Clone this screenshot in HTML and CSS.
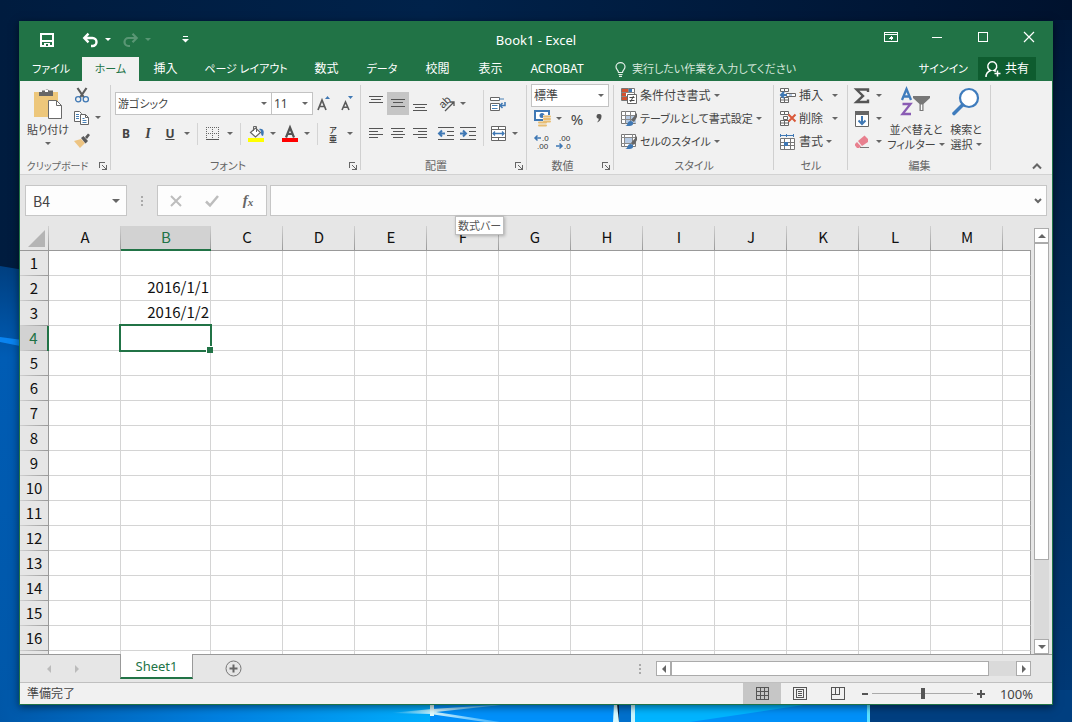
FILE: index.html
```html
<!DOCTYPE html>
<html lang="ja">
<head>
<meta charset="utf-8">
<title>Book1 - Excel</title>
<link rel="stylesheet" href="styles.css">
</head>
<body>
<svg class="wallpaper" viewBox="0 0 1072 722" preserveAspectRatio="none" aria-hidden="true">
  <defs>
    <linearGradient id="sky" x1="0" y1="0" x2="1" y2="0"><stop offset="0" stop-color="#001c3f"/><stop offset=".4" stop-color="#00224a"/><stop offset="1" stop-color="#00122e"/></linearGradient>
    <linearGradient id="leftGlow" x1="0" y1="0" x2="0" y2="1"><stop offset="0" stop-color="#003f80"/><stop offset=".2" stop-color="#005cb4"/><stop offset="1" stop-color="#0057a8"/></linearGradient>
    <linearGradient id="rightGlow" x1="0" y1="0" x2="0" y2="1"><stop offset="0" stop-color="#001737"/><stop offset=".5" stop-color="#002a59"/><stop offset="1" stop-color="#003a78"/></linearGradient>
    <linearGradient id="floor" x1="0" y1="0" x2="1" y2="0"><stop offset="0" stop-color="#0057a8"/><stop offset=".5" stop-color="#0080e0"/><stop offset="1" stop-color="#00b0ff"/></linearGradient>
    <linearGradient id="ray" x1="0" y1="0" x2="1" y2="0"><stop offset="0" stop-color="#9fe8ff" stop-opacity="0"/><stop offset="1" stop-color="#c8f4ff"/></linearGradient>
    <linearGradient id="rayOut" x1="0" y1="0" x2="1" y2="0"><stop offset="0" stop-color="#e0faff"/><stop offset="1" stop-color="#6fd0ff" stop-opacity=".4"/></linearGradient>
  </defs>
  <rect width="1072" height="722" fill="url(#sky)"/>
  <rect x="1040" y="20" width="32" height="702" fill="url(#rightGlow)"/>
  <path d="M0 266 L30 271 V722 H0Z" fill="url(#leftGlow)"/>
  <path d="M0 337 L30 341 V348 L0 342Z" fill="#0a84f0"/>
  <rect y="690" width="440" height="32" fill="url(#floor)"/>
  <rect x="430" y="690" width="184" height="32" fill="#0090fa"/>
  <path d="M390 713 L432 709 V714Z" fill="url(#ray)"/>
  <path d="M432 709 L510 704 L436 712 L500 722 H485 L430 714Z" fill="url(#rayOut)"/>
  <rect x="430" y="704" width="4" height="12" fill="#e0fbff"/>
  <rect x="619" y="690" width="13" height="32" fill="#0070cc"/>
  <path d="M614 704h3l2 18h-6z" fill="#d8f9ff"/>
  <rect x="631" y="690" width="4" height="32" fill="#c8f6ff"/>
  <rect x="635" y="690" width="232" height="32" fill="#00b4ff"/>
  <path d="M690 722 L810 704 H867 V722Z" fill="#0090f8"/>
  <rect x="867" y="690" width="3" height="32" fill="#5ce0ff"/>
  <rect x="870" y="690" width="202" height="32" fill="#003f80"/>
</svg>

<main class="window">
  <header class="titlebar">
    <div class="quick">
      <button class="qbtn" aria-label="上書き保存"><svg width="14" height="14" viewBox="0 0 14 14"><path d="M1 1h12v12H1z" fill="none" stroke="#fff" stroke-width="2"/><path d="M1 8h12" stroke="#fff" stroke-width="2"/><path d="M4 10h6v4H4z" fill="#fff"/><path d="M6 11h2v2H6z" fill="#217346"/></svg></button>
      <button class="qbtn undo" aria-label="元に戻す"><svg width="15" height="14" viewBox="0 0 15 14"><path d="M1 5h8.500a4 4 0 0 1 0 8H8M5.500 .7L1.300 5l4.200 4.300" fill="none" stroke="#fff" stroke-width="2.400"/></svg></button>
      <button class="drop light" aria-label="元に戻す一覧"><i class="caret"></i></button>
      <button class="qbtn dim" aria-label="やり直し"><svg width="15" height="14" viewBox="0 0 15 14"><path d="M14 5H5.500a4 4 0 0 0 0 8H7M9.500 .7L13.700 5 9.500 9.300" fill="none" stroke="#fff" stroke-width="2.200"/></svg></button>
      <button class="drop light dim" aria-label="やり直し一覧"><i class="caret"></i></button>
      <button class="qbtn custom" aria-label="カスタマイズ"><svg width="7" height="7" viewBox="0 0 7 7"><path d="M1 .5h5" stroke="#fff"/><path d="M0 3h7L3.500 6.500z" fill="#fff"/></svg></button>
    </div>
    <h1>Book1 - Excel</h1>
    <div class="winbtns">
      <button aria-label="リボンの表示オプション"><svg class="crisp" width="14" height="12" viewBox="0 0 14 12"><path d="M.5 1.500h13v9H.5zM.5 3.500h13M7 5v4M5 7h1v-1h2v1h1" fill="none" stroke="#fff"/></svg></button>
      <button aria-label="最小化"><svg class="crisp" width="10" height="10" viewBox="0 0 10 10"><path d="M0 5.500h10" stroke="#fff"/></svg></button>
      <button aria-label="最大化"><svg class="crisp" width="10" height="10" viewBox="0 0 10 10"><path d="M.5 .5h9v9h-9z" fill="none" stroke="#fff"/></svg></button>
      <button aria-label="閉じる"><svg width="10" height="10" viewBox="0 0 10 10"><path d="M0 0l10 10M10 0L0 10" stroke="#fff" stroke-width="1.200"/></svg></button>
    </div>
  </header>

  <nav class="tabs">
    <button class="t-file kana">ファイル</button>
    <button class="t-home kana current">ホーム</button>
    <button class="t-two">挿入</button>
    <button class="t-page kana">ページ レイアウト</button>
    <button class="t-two">数式</button>
    <button class="t-data kana">データ</button>
    <button class="t-two">校閲</button>
    <button class="t-two">表示</button>
    <button class="t-acro">ACROBAT</button>
    <button class="tell kana"><svg width="11" height="15" viewBox="0 0 11 15"><path d="M3.500 10.500C3.500 8 1 7.500 1 4.800a4.500 4.200 0 0 1 9 0c0 2.700-2.500 3.200-2.500 5.700zM3.500 12.500h4M4 14.300h3" fill="none" stroke="#e4efe8" stroke-width="1.200"/></svg>実行したい作業を入力してください</button>
    <span class="spacer"></span>
    <button class="signin kana">サインイン</button>
    <button class="share"><svg width="16" height="16" viewBox="0 0 16 16"><path d="M1 16c0-4 2-5.500 4.500-6.500a4.500 4.500 0 1 1 3.500 0c.8.300 1.300.6 1.800 1M12.500 9.500v6M9.500 12.500h6" fill="none" stroke="#fff" stroke-width="1.500"/></svg>共有</button>
  </nav>

  <section class="ribbon">
    <div class="group clipboard">
      <div class="body">
        <button class="big kana"><svg width="30" height="32" viewBox="0 0 30 32"><path d="M1 4h24v25H1z" fill="#edc77b"/><path d="M6 4h3V2.500h3a2.500 2.500 0 0 1 4 0h4V4h0v4H6z" fill="#666"/><path d="M12 2h3v2h-3z" fill="#fff"/><path d="M15.500 12.500h8l5 5v13h-13z" fill="#fff" stroke="#6a6a6a"/><path d="M23.500 12.500v5h5" fill="none" stroke="#6a6a6a"/></svg><span>貼り付け</span><i class="caret"></i></button>
        <div class="stack">
          <button aria-label="切り取り"><svg width="16" height="16" viewBox="0 0 16 16"><path d="M3.500 1l6.500 9.500M12.500 1L6 10.500" stroke="#5c5c5c" stroke-width="2.200"/><circle cx="4.200" cy="12.300" r="2.600" fill="none" stroke="#3f78b4" stroke-width="1.300"/><circle cx="11.800" cy="12.300" r="2.600" fill="none" stroke="#3f78b4" stroke-width="1.300"/></svg></button>
          <button aria-label="コピー"><svg width="16" height="16" viewBox="0 0 16 16"><path d="M.5 1.500h5l2 2v8h-7z" fill="#fff" stroke="#666"/><path d="M6.500 4.500h5l3 3v7h-8z" fill="#fff" stroke="#666"/><path d="M11.500 4.500v3h3" fill="none" stroke="#666"/><path d="M2 4.500h3M2 6.500h3M2 8.500h3M8.500 8.500h2M8.500 10.500h4M8.500 12.500h4" fill="none" stroke="#4880b5"/></svg><i class="caret"></i></button>
          <button aria-label="書式のコピー"><svg width="16" height="16" viewBox="0 0 16 16"><path d="M0 8l7-2 4 4-5 5z" fill="#edc482"/><path d="M7 5l2.500-2 4.500 5-2.500 2.500zM11 4l3-3.500 2 1.500-3 4z" fill="#5a5a5a"/></svg></button>
        </div>
      </div>
      <div class="label"><span>クリップボード</span><button class="launch" aria-label="クリップボードの詳細"><svg class="crisp" width="8" height="8" viewBox="0 0 8 8"><path d="M.5 6V.5H6M3 3l4 4M7.500 3v4.500H3" fill="none" stroke="#666"/></svg></button></div>
    </div>

    <div class="group font">
      <div class="body rows">
        <div class="row">
          <label class="combo name kana"><select aria-label="フォント"><option>游ゴシック</option></select></label><label class="combo size"><select aria-label="フォント サイズ"><option>11</option></select></label>
          <button class="ic" aria-label="拡大"><svg width="14" height="15" viewBox="0 0 14 15"><path d="M1 14L5 4l4 10M2.500 10.500h5" fill="none" stroke="#5a5a5a" stroke-width="1.700"/><path d="M8 3l2.500-3L13 3z" fill="#3f78b4"/></svg></button>
          <button class="ic" aria-label="縮小"><svg width="14" height="15" viewBox="0 0 14 15"><path d="M3 14l3.500-8L10 14M4.300 11.300h4.400" fill="none" stroke="#5a5a5a" stroke-width="1.600"/><path d="M9 0h5l-2.500 3z" fill="#3f78b4"/></svg></button>
        </div>
        <div class="row">
          <button class="ic bold">B</button><button class="ic ital">I</button><button class="ic under">U</button><button class="drop" aria-label="下線"><i class="caret"></i></button>
          <span class="sep"></span>
          <button class="ic" aria-label="罫線"><svg class="crisp" width="14" height="14" viewBox="0 0 14 14"><path d="M0 .5h13M0 6.500h13M.5 0v13M6.500 0v13M12.500 0v13" stroke="#666" stroke-dasharray="1 1"/><path d="M0 12.500h13" stroke="#555"/></svg></button><button class="drop" aria-label="罫線一覧"><i class="caret"></i></button>
          <span class="sep"></span>
          <button class="ic" aria-label="塗りつぶし"><svg width="16" height="17" viewBox="0 0 16 17"><path d="M2.500 7.500l5-4.500 5 4.500-5 4.500z" fill="#fff" stroke="#666" stroke-width="1.200"/><path d="M5.500 6V1.500h3V7" fill="none" stroke="#666"/><path d="M11 4c4-1 6 2 4 7-2 0-2-3-2-5z" fill="#3f78b4"/><path d="M0 13h16v4H0z" fill="#ff0"/></svg></button><button class="drop" aria-label="塗りつぶし一覧"><i class="caret"></i></button>
          <button class="ic" aria-label="文字の色"><svg width="16" height="17" viewBox="0 0 16 17"><path d="M4 12.500L8 2.500l4 10M5.500 9h5" fill="none" stroke="#555" stroke-width="2.200"/><path d="M0 13h16v4H0z" fill="#f00"/></svg></button><button class="drop" aria-label="文字の色一覧"><i class="caret"></i></button>
          <span class="sep"></span>
          <button class="ic" aria-label="ふりがな"><svg width="12" height="18" viewBox="0 0 12 18"><text x="2" y="8" class="rubytext">ア</text><text x="2" y="17" class="rubytext">亜</text></svg></button><button class="drop" aria-label="ふりがな一覧"><i class="caret"></i></button>
        </div>
      </div>
      <div class="label"><span>フォント</span><button class="launch" aria-label="フォントの詳細"><svg class="crisp" width="8" height="8" viewBox="0 0 8 8"><path d="M.5 6V.5H6M3 3l4 4M7.500 3v4.500H3" fill="none" stroke="#666"/></svg></button></div>
    </div>

    <div class="group align">
      <div class="body">
        <div class="rows">
          <div class="row">
            <button class="ic" aria-label="上揃え"><svg class="crisp" width="14" height="16" viewBox="0 0 14 16"><path d="M0 .5h14M2 3.500h10M0 6.500h14" stroke="#555"/></svg></button><button class="ic on" aria-label="上下中央揃え"><svg class="crisp" width="14" height="16" viewBox="0 0 14 16"><path d="M0 3.500h14M2 6.500h10M0 10.500h14" stroke="#555"/></svg></button><button class="ic" aria-label="下揃え"><svg class="crisp" width="14" height="16" viewBox="0 0 14 16"><path d="M0 8.500h14M2 11.500h10M0 14.500h14" stroke="#555"/></svg></button>
            <button class="ic gap" aria-label="方向"><svg width="17" height="16" viewBox="0 0 17 16"><text transform="translate(5 13) rotate(-45)" class="abtext">ab</text><path d="M7 15L15.500 6.500M12 6h4v4" fill="none" stroke="#555" stroke-width="1.300"/></svg></button><button class="drop" aria-label="方向一覧"><i class="caret"></i></button>
          </div>
          <div class="row">
            <button class="ic" aria-label="左揃え"><svg class="crisp" width="14" height="13" viewBox="0 0 14 13"><path d="M0 1.500h14M0 4.500h9M0 7.500h14M0 10.500h9" stroke="#555"/></svg></button><button class="ic" aria-label="中央揃え"><svg class="crisp" width="14" height="13" viewBox="0 0 14 13"><path d="M0 1.500h14M2 4.500h10M0 7.500h14M2 10.500h10" stroke="#555"/></svg></button><button class="ic" aria-label="右揃え"><svg class="crisp" width="14" height="13" viewBox="0 0 14 13"><path d="M0 1.500h14M5 4.500h9M0 7.500h14M5 10.500h9" stroke="#555"/></svg></button>
            <button class="ic gap" aria-label="インデントを減らす"><svg width="16" height="13" viewBox="0 0 16 13"><path class="crisp" d="M0 .5h16M9 4.500h7M9 8.500h7M0 12.500h16" stroke="#555"/><path d="M1 6.500h6M4 3.500l-3 3 3 3" fill="none" stroke="#3f78b4" stroke-width="2"/></svg></button><button class="ic" aria-label="インデントを増やす"><svg width="16" height="13" viewBox="0 0 16 13"><path class="crisp" d="M0 .5h16M9 4.500h7M9 8.500h7M0 12.500h16" stroke="#555"/><path d="M0 6.500h6M3 3.500l3 3-3 3" fill="none" stroke="#3f78b4" stroke-width="2"/></svg></button>
          </div>
        </div>
        <span class="sep tall"></span>
        <div class="rows">
          <div class="row"><button class="ic" aria-label="折り返して全体を表示する"><svg width="16" height="16" viewBox="0 0 16 16"><path d="M.5 1.500h9v3h-9zM.5 7.500h9v7h-9z" fill="#fff" stroke="#666"/><path d="M9 3h5M2 9.500h5.500M2 12.500h5.500" stroke="#4880b5" stroke-width="1.200"/><path d="M15 6v3.500h-5M12.500 7l-2.500 2.500 2.500 2.500" fill="none" stroke="#3f78b4" stroke-width="1.500"/></svg></button></div>
          <div class="row"><button class="ic" aria-label="セルを結合して中央揃え"><svg width="15" height="15" viewBox="0 0 15 15"><path d="M.5 .5h14v14H.5zM.5 3.500h14M.5 11.500h14M7.500 .5v3M7.500 11.500v3" fill="#fff" stroke="#666"/><path d="M2 7.500h11M4 5.500l-2 2 2 2M11 5.500l2 2-2 2" fill="none" stroke="#3f78b4" stroke-width="1.300"/></svg></button><button class="drop" aria-label="結合一覧"><i class="caret"></i></button></div>
        </div>
      </div>
      <div class="label"><span>配置</span><button class="launch" aria-label="配置の詳細"><svg class="crisp" width="8" height="8" viewBox="0 0 8 8"><path d="M.5 6V.5H6M3 3l4 4M7.500 3v4.500H3" fill="none" stroke="#666"/></svg></button></div>
    </div>

    <div class="group number">
      <div class="body dense">
        <label class="combo fmt"><select aria-label="表示形式"><option>標準</option></select></label>
        <div class="row">
          <button class="ic" aria-label="通貨"><svg width="17" height="17" viewBox="0 0 17 17"><path d="M1 1h14v9H1z" fill="#fff" stroke="#3f78b4" stroke-width="2"/><circle cx="8" cy="5.500" r="2.500" fill="#3f78b4"/><path d="M9 5h8v8h-4v4H5v-6h4z" fill="#f1f1f1"/><path d="M10 6.500h6M10 9h6M10 11.500h6M5 12.500h7M5 15.500h7" stroke="#e8bd72" stroke-width="2" stroke-linecap="round"/></svg></button><button class="drop" aria-label="通貨一覧"><i class="caret"></i></button><button class="ic pct">%</button><button class="ic" aria-label="桁区切り"><svg width="6" height="9" viewBox="0 0 6 9"><path d="M3 0a2.300 2.300 0 0 1 2.500 2.500C5.500 5 4 7.500 1 8.500c1-1.300 1.800-2.300 1.700-3.700A2.400 2.400 0 0 1 3 0z" fill="#555"/></svg></button>
        </div>
        <div class="row">
          <button class="ic" aria-label="小数点以下の表示桁数を増やす"><svg width="16" height="16" viewBox="0 0 16 16"><text x="8" y="7" class="dec">.0</text><text x="3" y="15" class="dec">.00</text><path d="M1 4h6M3.500 1.500L1 4l2.500 2.500" fill="none" stroke="#3f78b4" stroke-width="1.500"/></svg></button><button class="ic" aria-label="小数点以下の表示桁数を減らす"><svg width="16" height="16" viewBox="0 0 16 16"><text x="3" y="7" class="dec">.00</text><text x="8" y="15" class="dec">.0</text><path d="M0 12h6M3.500 9.500L6 12l-2.500 2.500" fill="none" stroke="#3f78b4" stroke-width="1.500"/></svg></button>
        </div>
      </div>
      <div class="label"><span>数値</span><button class="launch" aria-label="数値の詳細"><svg class="crisp" width="8" height="8" viewBox="0 0 8 8"><path d="M.5 6V.5H6M3 3l4 4M7.500 3v4.500H3" fill="none" stroke="#666"/></svg></button></div>
    </div>

    <div class="group styles">
      <div class="body dense">
        <button class="line"><svg width="16" height="16" viewBox="0 0 16 16"><path d="M.5 .5h13v12H.5z" fill="#fff" stroke="#777"/><path d="M1 1h6v3H1zM1 5h4v3H1zM1 9h5v3H1z" fill="#d35230"/><path d="M8 1h3v3H8z" fill="#3f78b4"/><path d="M0 4.500h14M0 8.500h6M7.500 0v5" stroke="#888"/><path d="M6.500 6.500h9v9h-9z" fill="#fff" stroke="#666"/><path d="M8.500 9.500h5M8.500 12.500h5M12.500 8l-3 6" stroke="#444"/></svg><span>条件付き書式</span><i class="caret"></i></button>
        <button class="line kana"><svg width="16" height="16" viewBox="0 0 16 16"><path d="M.5 .5h14v12H.5z" fill="#fff" stroke="#777"/><path d="M5 4h10v8H5z" fill="#b5c9e2"/><path d="M0 4.500h14M0 8.500h14M4.500 0v13M9.500 0v13" stroke="#888"/><path d="M16 2l-6 7 3 2 3-5z" fill="#666"/><path d="M4 15c3 0 2-5 5.500-5s4 5-1 5z" fill="#3f78b4"/></svg><span>テーブルとして書式設定</span><i class="caret"></i></button>
        <button class="line kana"><svg width="16" height="16" viewBox="0 0 16 16"><path d="M.5 .5h14v12H.5z" fill="#fff" stroke="#777"/><path d="M4 4h7v5H4z" fill="#b5c9e2"/><path d="M0 3.500h14M0 9.500h14M3.500 0v13M11.500 0v13" stroke="#888"/><path d="M16 2l-6 7 3 2 3-5z" fill="#666"/><path d="M4 15c3 0 2-5 5.500-5s4 5-1 5z" fill="#3f78b4"/></svg><span>セルのスタイル</span><i class="caret"></i></button>
      </div>
      <div class="label"><span>スタイル</span></div>
    </div>

    <div class="group cells">
      <div class="body dense">
        <button class="line wide"><svg width="16" height="16" viewBox="0 0 16 16"><path d="M.5 .5h4v3h-4zM4.500 .5h4v3h-4zM.5 9.500h4v5h-4zM4.500 9.500h4v5h-4zM.5 12h8M6.500 5.500h9v3h-9z" fill="#fff" stroke="#666"/><path d="M9 6h3v2H9z" fill="#b5c9e2"/><path d="M1 7h6M4 4L1 7l3 3" fill="none" stroke="#3f78b4" stroke-width="2"/></svg><span>挿入</span><i class="caret"></i></button>
        <button class="line wide"><svg width="16" height="16" viewBox="0 0 16 16"><path d="M.5 .5h4v3h-4zM4.500 .5h4v3h-4zM.5 9.500h4v5h-4zM4.500 9.500h4v5h-4zM.5 12h8M3.500 5.500h4v3h-4z" fill="#fff" stroke="#666"/><path d="M8.500 3.500l7 7M15.500 3.500l-7 7" stroke="#d9593a" stroke-width="2"/></svg><span>削除</span><i class="caret"></i></button>
        <button class="line"><svg width="16" height="16" viewBox="0 0 16 16"><path d="M.5 4.500h14v11H.5zM.5 8.500h14M.5 11.500h14M4.500 4.500v11M10.500 4.500v11" fill="#fff" stroke="#777"/><path d="M4 8h4v4H4z" fill="#3f78b4"/><path d="M1 1.500h12M.5 0v3M13.500 0v3M6.500 0v3" stroke="#3f78b4"/></svg><span>書式</span><i class="caret"></i></button>
      </div>
      <div class="label"><span>セル</span></div>
    </div>

    <div class="group edit">
      <div class="body">
        <div class="dense">
          <button class="line" aria-label="合計"><svg width="16" height="16" viewBox="0 0 16 16"><path d="M14 4V1.500H2.500L9 8l-6.500 6H14V11.500" fill="none" stroke="#555" stroke-width="2.400"/></svg><i class="caret"></i></button>
          <button class="line" aria-label="フィル"><svg width="16" height="16" viewBox="0 0 16 16"><path d="M1.500 .5h13v15h-13z" fill="#fff" stroke="#666"/><path d="M1 0h14v4H1z" fill="#666"/><path d="M8 5v8M4.500 9.500L8 13l3.500-3.500" fill="none" stroke="#3f78b4" stroke-width="2"/></svg><i class="caret"></i></button>
          <button class="line" aria-label="クリア"><svg width="16" height="14" viewBox="0 0 16 14"><path d="M4 6l6.500-5.500L14 4v3L8 11z" fill="#e8808f"/><path d="M3 7l4 4.500-2 1.500H3L1 10.500V9z" fill="#e8808f"/><path d="M6 12.500h9" stroke="#777"/></svg><i class="caret"></i></button>
        </div>
        <button class="tool sort kana"><svg width="32" height="32" viewBox="0 0 32 32"><path d="M2 13L6.500 2 11 13M3.500 9.500h6" fill="none" stroke="#3f7cbd" stroke-width="2.300"/><path d="M2.500 17h8L2.500 27H11" fill="none" stroke="#8a5cb4" stroke-width="2.300"/><path d="M13 9h17v2l-6.500 6v7h-4v-7L13 11z" fill="#777"/><path d="M20.800 17.500h1.500V23h-1.500z" fill="#fff"/></svg><span>並べ替えと</span><span>フィルター<i class="caret"></i></span></button>
        <button class="tool find kana"><svg width="32" height="32" viewBox="0 0 32 32"><circle cx="19" cy="11" r="9" fill="#fff" stroke="#3f7cbd" stroke-width="2.200"/><path d="M12.500 18L4 26.500" stroke="#3f7cbd" stroke-width="3.600" stroke-linecap="round"/></svg><span>検索と</span><span>選択<i class="caret"></i></span></button>
      </div>
      <div class="label"><span>編集</span></div>
    </div>
    <span class="spacer"></span>
    <button class="collapse" aria-label="リボンを折りたたむ"><svg width="10" height="7" viewBox="0 0 10 7"><path d="M1 5.500l4-4 4 4" fill="none" stroke="#666" stroke-width="2"/></svg></button>
  </section>

  <section class="formula">
    <label class="namebox"><input value="B4" aria-label="名前ボックス"><i class="caret"></i></label>
    <span class="dots"><i></i><i></i><i></i></span>
    <div class="fxbox">
      <button aria-label="キャンセル"><svg width="12" height="12" viewBox="0 0 12 12"><path d="M1 1l10 10M11 1L1 11" stroke="#bdbdbd" stroke-width="2"/></svg></button>
      <button aria-label="入力"><svg width="14" height="12" viewBox="0 0 14 12"><path d="M1 6.500l4 4L13 1" fill="none" stroke="#bdbdbd" stroke-width="2.500"/></svg></button>
      <button class="fx" aria-label="関数の挿入">f<small>x</small></button>
    </div>
    <div class="entry"><input aria-label="数式バー"><svg width="8" height="6" viewBox="0 0 8 6"><path d="M1 1l3 3 3-3" fill="none" stroke="#666" stroke-width="2"/></svg><span class="tip" role="tooltip">数式バー</span></div>
  </section>

  <section class="work">
    <div class="viewport">
      <table>
        <colgroup><col class="c-head"><col class="c"><col class="c-b"><col class="c"><col class="c"><col class="c"><col class="c"><col class="c"><col class="c"><col class="c"><col class="c"><col class="c"><col class="c"><col class="c"><col></colgroup>
        <thead><tr><th class="corner"></th><th>A</th><th class="sel">B</th><th>C</th><th>D</th><th>E</th><th>F</th><th>G</th><th>H</th><th>I</th><th>J</th><th>K</th><th>L</th><th>M</th><th class="end"></th></tr></thead>
        <tbody>
          <tr><th>1</th><td><td><td><td><td><td><td><td><td><td><td><td><td><td></tr>
          <tr><th>2</th><td><td>2016/1/1<td><td><td><td><td><td><td><td><td><td><td><td></tr>
          <tr><th>3</th><td><td>2016/1/2<td><td><td><td><td><td><td><td><td><td><td><td></tr>
          <tr><th class="sel">4</th><td><td class="active"><td><td><td><td><td><td><td><td><td><td><td><td></tr>
          <tr><th>5</th><td><td><td><td><td><td><td><td><td><td><td><td><td><td></tr>
          <tr><th>6</th><td><td><td><td><td><td><td><td><td><td><td><td><td><td></tr>
          <tr><th>7</th><td><td><td><td><td><td><td><td><td><td><td><td><td><td></tr>
          <tr><th>8</th><td><td><td><td><td><td><td><td><td><td><td><td><td><td></tr>
          <tr><th>9</th><td><td><td><td><td><td><td><td><td><td><td><td><td><td></tr>
          <tr><th>10</th><td><td><td><td><td><td><td><td><td><td><td><td><td><td></tr>
          <tr><th>11</th><td><td><td><td><td><td><td><td><td><td><td><td><td><td></tr>
          <tr><th>12</th><td><td><td><td><td><td><td><td><td><td><td><td><td><td></tr>
          <tr><th>13</th><td><td><td><td><td><td><td><td><td><td><td><td><td><td></tr>
          <tr><th>14</th><td><td><td><td><td><td><td><td><td><td><td><td><td><td></tr>
          <tr><th>15</th><td><td><td><td><td><td><td><td><td><td><td><td><td><td></tr>
          <tr><th>16</th><td><td><td><td><td><td><td><td><td><td><td><td><td><td></tr>
          <tr><th></th><td><td><td><td><td><td><td><td><td><td><td><td><td><td></tr>
        </tbody>
      </table>
    </div>
    <div class="vscroll"><button aria-label="上へ"><i class="tri up"></i></button><span class="thumb"></span><span class="track"></span><button aria-label="下へ"><i class="tri down"></i></button></div>
  </section>

  <section class="sheets">
    <div class="nav"><button aria-label="前のシート"><i class="tri left pale"></i></button><button aria-label="次のシート"><i class="tri right pale"></i></button></div>
    <button class="sheet">Sheet1</button>
    <div class="rest">
      <button class="add" aria-label="新しいシート"><svg width="17" height="17" viewBox="0 0 17 17"><circle cx="8.500" cy="8.500" r="7.500" fill="none" stroke="#777"/><path d="M8.500 4.500v8M4.500 8.500h8" stroke="#666" stroke-width="2"/></svg></button>
      <span class="spacer"></span>
      <span class="dots"><i></i><i></i><i></i></span>
      <div class="hscroll"><button aria-label="左へ"><i class="tri left"></i></button><span class="thumb"></span><span class="track"></span><button aria-label="右へ"><i class="tri right"></i></button></div>
    </div>
  </section>

  <footer class="status">
    <span>準備完了</span>
    <span class="spacer"></span>
    <button class="view on" aria-label="標準"><svg class="crisp" width="13" height="13" viewBox="0 0 13 13"><path d="M.5 .5h12v12H.5zM.5 4.500h12M.5 8.500h12M4.500 .5v12M8.500 .5v12" fill="none" stroke="#555"/></svg></button>
    <button class="view" aria-label="ページ レイアウト"><svg class="crisp" width="14" height="13" viewBox="0 0 14 13"><path d="M.5 .5h13v12H.5zM3.500 2.500h7v8h-7zM5 4.500h4M5 6.500h4M5 8.500h4" fill="none" stroke="#555"/></svg></button>
    <button class="view" aria-label="改ページ プレビュー"><svg class="crisp" width="14" height="13" viewBox="0 0 14 13"><path d="M.5 .5h13v12H.5zM4.500 0v7M8.500 0v7M0 7.500h9" fill="none" stroke="#555"/></svg></button>
    <button class="zbtn" aria-label="縮小"><svg width="6" height="10" viewBox="0 0 6 10"><path d="M0 5h6" stroke="#555" stroke-width="2"/></svg></button>
    <input type="range" min="0" max="100" value="50" aria-label="ズーム">
    <button class="zbtn" aria-label="拡大"><svg width="8" height="10" viewBox="0 0 8 10"><path d="M0 5h8M4 1v8" stroke="#555" stroke-width="2"/></svg></button>
    <button class="pctlabel">100%</button>
  </footer>
</main>
</body>
</html>
```

FILE: styles.css
```css
* { box-sizing: border-box; }

body {
  margin: 0;
  height: 100vh;
  padding: 21px 19px 17px;
  display: flex;
  overflow: hidden;
  background: #001a38;
  color: #444;
  font: 12px/16px "Noto Sans", "Noto Sans CJK JP", sans-serif;
  font-feature-settings: "palt";
}

button, input, select {
  margin: 0;
  padding: 0;
  border: 0;
  background: none;
  color: inherit;
  font: inherit;
  font-feature-settings: inherit;
  outline: none;
}

button {
  display: flex;
  align-items: center;
  justify-content: center;
  white-space: nowrap;
}

svg { display: block; flex: none; overflow: visible; }
.crisp { shape-rendering: crispEdges; }
.spacer { flex: 1; }
.kana { font-size: 11px; }

.wallpaper {
  position: absolute;
  inset: 0;
  width: 100%;
  height: 100%;
  overflow: hidden;
}

.window {
  position: relative;
  flex: 1;
  min-width: 0;
  display: flex;
  flex-direction: column;
  border: solid #217346;
  border-width: 0 1px 1px;
  background: #e6e6e6;
  box-shadow: 0 2px 8px rgba(0, 0, 0, .5);
}

.caret {
  flex: none;
  width: 0;
  height: 0;
  border: solid transparent;
  border-width: 3px 3px 0;
  border-top-color: #666;
}

/* Title bar */
.titlebar {
  height: 36px;
  display: grid;
  grid-template-columns: 1fr auto 1fr;
  background: #217346;
  color: #fff;
}
.titlebar h1 { margin: 0; font-size: 13px; line-height: 39px; font-weight: 400; }
.quick { display: flex; align-items: center; padding: 0 0 2px 16px; }
.qbtn { width: 22px; height: 34px; }
.undo { margin-left: 21px; }
.light { margin-right: 5px; }
.light .caret { border-top-color: #fff; }
.dim { opacity: .25; }
.undo + .light, .dim + .light { margin-left: 1px; }
.custom { margin-left: 15px; }
.drop { width: 12px; height: 24px; }
.winbtns { display: flex; justify-content: flex-end; }
.winbtns button { width: 46px; height: 32px; }

/* Ribbon tabs */
.tabs { display: flex; height: 24px; background: #217346; color: #fff; }
.tabs button { height: 24px; }
.t-file { width: 62px; }
.t-home { width: 57px; }
.t-two { width: 53px; }
.t-page { width: 108px; }
.t-data { width: 58px; }
.t-acro { width: 80px; }
.tabs .current { background: #f1f1f1; color: #217346; }
.tell { gap: 6px; padding-left: 18px; color: #d5e6db; }
.signin { padding: 0 10px; }
.tabs .share { width: 58px; height: 23px; gap: 4px; margin-right: 16px; background: #0e5c2f; }

/* Ribbon */
.ribbon {
  display: flex;
  height: 94px;
  background: #f1f1f1;
  border-bottom: 1px solid #d2d2d2;
}
.group {
  flex: none;
  display: flex;
  flex-direction: column;
  position: relative;
}
.group::after {
  content: "";
  position: absolute;
  right: 0;
  top: 4px;
  bottom: 4px;
  width: 1px;
  background: #d0d0d0;
}
.clipboard { width: 91px; }
.font { width: 250px; }
.align { width: 166px; }
.number { width: 87px; }
.styles { width: 160px; }
.cells { width: 74px; }
.edit { width: 143px; }

.body { flex: 1; min-height: 0; display: flex; }
.rows { display: flex; flex-direction: column; gap: 7px; padding-top: 11px; }
.dense { display: flex; flex-direction: column; padding-top: 3px; }
.row { display: flex; align-items: center; height: 23px; flex: none; }
.label {
  display: flex;
  height: 17px;
  align-items: center;
  color: #666;
  font-size: 11px;
}
.label span { flex: 1; text-align: center; }
.clipboard .label { font-size: 10px; }
.launch { width: 16px; height: 16px; }

.ic { width: 22px; height: 23px; flex: none; }
.ic.on { background: #c5c5c5; }
.ic.gap { margin-left: 4px; }
.sep { width: 1px; height: 22px; margin: 0 4px; background: #d4d4d4; }
.sep.tall { height: 56px; margin-top: 9px; }

.big { flex-direction: column; justify-content: flex-start; width: 48px; padding-top: 7px; margin-left: 4px; }
.big span { line-height: 20px; }
.big .caret { margin-top: 2px; }
.stack { display: flex; flex-direction: column; padding: 2px 0 0 2px; }
.stack button { height: 23px; gap: 5px; justify-content: flex-start; }

.combo { position: relative; display: block; height: 23px; background: #fff; border: 1px solid #c3c3c3; }
.combo select { width: 100%; height: 21px; padding-left: 2px; appearance: none; }
.combo::after {
  content: "";
  position: absolute;
  right: 4px;
  top: 9px;
  border: solid transparent;
  border-width: 3px 3px 0;
  border-top-color: #666;
}
.combo.name { width: 157px; }
.combo.size { width: 41px; border-left: 0; }
.combo.fmt { width: 78px; }
.font .body, .align .body, .number .body { padding-left: 4px; }
.align .sep { margin-right: 3px; }

.bold { font-weight: 700; }
.ital { font-family: "Liberation Serif", serif; font-style: italic; font-weight: 700; font-size: 14px; }
.under { font-weight: 700; text-decoration: underline; }
.rubytext { font: 500 8px "Liberation Sans", "Noto Sans CJK JP", sans-serif; fill: #333; }
.pct { font-size: 15px; margin-left: 1px; }
.abtext { font: 11px "Liberation Sans", sans-serif; fill: #444; }
.dec { font: 8px "Liberation Sans", sans-serif; fill: #333; }

.line { height: 23px; gap: 3px; justify-content: flex-start; }
.line.wide .caret { margin-left: 6px; }
.styles .body { padding-left: 7px; }
.cells .body { padding-left: 6px; }
.edit .body { padding-left: 6px; }
.edit .line { gap: 6px; }

.tool { flex-direction: column; justify-content: flex-start; padding-top: 6px; line-height: 15px; }
.tool svg { margin-bottom: 3px; }
.tool .caret { display: inline-block; vertical-align: 3px; margin-left: 3px; }
.sort { width: 58px; margin-left: 5px; }
.find { width: 40px; margin-left: 1px; }
.collapse { align-self: flex-end; width: 30px; height: 16px; }

/* Formula bar */
.formula { display: flex; height: 51px; padding: 10px 5px; }
.namebox, .fxbox, .entry { display: flex; align-items: center; height: 31px; background: #fdfdfd; border: 1px solid #c6c6c6; }
.namebox { width: 102px; padding: 0 6px 0 7px; }
.namebox input { flex: 1; min-width: 0; font: 14px "Noto Sans CJK JP", sans-serif; }
.namebox .caret { border-width: 4px 4px 0; }
.dots { display: flex; flex-direction: column; justify-content: center; gap: 2px; width: 30px; align-items: center; }
.dots i { width: 2px; height: 2px; background: #aaa; }
.fxbox { width: 110px; margin-right: 3px; }
.fxbox button { flex: 1; }
.fx { font: italic 700 15px "Liberation Serif", serif; color: #666; }
.fx small { font-size: 11px; padding-top: 3px; }
.entry { flex: 1; position: relative; padding-right: 4px; }
.entry input { flex: 1; min-width: 0; }
.tip {
  position: absolute;
  left: 184px;
  top: 30px;
  z-index: 2;
  padding: 0 2px;
  border: 1px solid #bebebe;
  background: #fff;
  color: #575757;
  font-size: 11px;
  line-height: 17px;
  box-shadow: 1px 1px 3px rgba(0, 0, 0, .25);
}

/* Grid */
.work { flex: 1; min-height: 0; display: flex; }
.viewport { flex: 1; min-width: 0; overflow: hidden; }
table {
  width: 100%;
  table-layout: fixed;
  border-collapse: separate;
  border-spacing: 0;
  color: #111;
  font: 15px/22px "Noto Sans CJK JP", sans-serif;
}
.c-head { width: 29px; }
.c { width: 72px; }
.c-b { width: 90px; }
th, td { height: 25px; padding: 0 0 2px; }
th { font-weight: 400; text-align: center; }
thead th {
  border-bottom: 1px solid #999;
  background: linear-gradient(#d0d0d0, #999) right / 1px 100% no-repeat #e6e6e6;
}
thead .sel { background-color: #d2d2d2; color: #217346; border-bottom: 2px solid #217346; padding-bottom: 1px; }
thead .end { background: #e6e6e6; }
.corner { position: relative; }
.corner::after {
  content: "";
  position: absolute;
  right: 4px;
  bottom: 3px;
  border: solid transparent;
  border-width: 0 0 17px 17px;
  border-bottom-color: #b4b4b4;
}
tbody th {
  border-right: 1px solid #999;
  background: linear-gradient(90deg, #d0d0d0, #999) bottom / 100% 1px no-repeat #e6e6e6;
}
tbody .sel { background-color: #d2d2d2; color: #217346; border-right: 2px solid #217346; }
td { border: solid #d4d4d4; border-width: 0 1px 1px 0; padding-right: 1px; background: #fff; text-align: right; }
td:last-child { border-right-color: #999; }
.active { position: relative; }
.active::before { content: ""; position: absolute; inset: -2px; border: 2px solid #217346; }
.active::after { content: ""; position: absolute; right: -3px; bottom: -3px; width: 6px; height: 6px; background: #217346; border: solid #fff; border-width: 1px 0 0 1px; }

/* Scroll bars */
.vscroll { width: 21px; padding: 2px 3px 0 3px; display: flex; flex-direction: column; }
.vscroll button, .hscroll button { flex: none; width: 15px; height: 15px; background: #fff; border: 1px solid #ababab; }
.thumb { background: #fff; border: 1px solid #ababab; }
.track { background: #dadada; }
.vscroll .thumb { flex: 317; }
.vscroll .track { flex: 80; }
.hscroll { display: flex; width: 375px; height: 15px; }
.hscroll .thumb { flex: 318; }
.hscroll .track { flex: 27; }
.tri { border: 4px solid transparent; }
.up { border-width: 0 4px 4px; border-bottom-color: #666; }
.down { border-width: 4px 4px 0; border-top-color: #666; }
.left { border-width: 4px 4px 4px 0; border-right-color: #666; }
.right { border-width: 4px 0 4px 4px; border-left-color: #666; }
.left.pale { border-right-color: #bbb; }
.right.pale { border-left-color: #bbb; }

/* Sheet tabs */
.sheets { display: flex; height: 28px; }
.nav { width: 100px; display: flex; border-top: 1px solid #999; padding-left: 15px; }
.nav button { width: 28px; }
.sheet {
  width: 73px;
  height: 25px;
  background: #fff;
  border: solid #999;
  border-width: 0 1px 2px;
  border-bottom-color: #217346;
  color: #217346;
  font-size: 13px;
}
.rest { flex: 1; display: flex; align-items: center; border-top: 1px solid #999; padding: 0 21px 0 32px; }
.rest .dots { width: 32px; }

/* Status bar */
.status { display: flex; align-items: center; height: 22px; padding: 0 16px 0 7px; background: #f1f1f1; border-top: 1px solid #c0c0c0; }
.view { width: 38px; height: 21px; }
.view.on { background: #c6c6c6; }
.zbtn { width: 15px; height: 21px; }
.status input { width: 101px; height: 13px; appearance: none; background: linear-gradient(#aaa, #aaa) center / 100% 1px no-repeat; }
.status input::-webkit-slider-thumb { appearance: none; width: 4px; height: 11px; background: #555; }
.pctlabel { margin-left: 9px; width: 39px; font-size: 13px; }
```
